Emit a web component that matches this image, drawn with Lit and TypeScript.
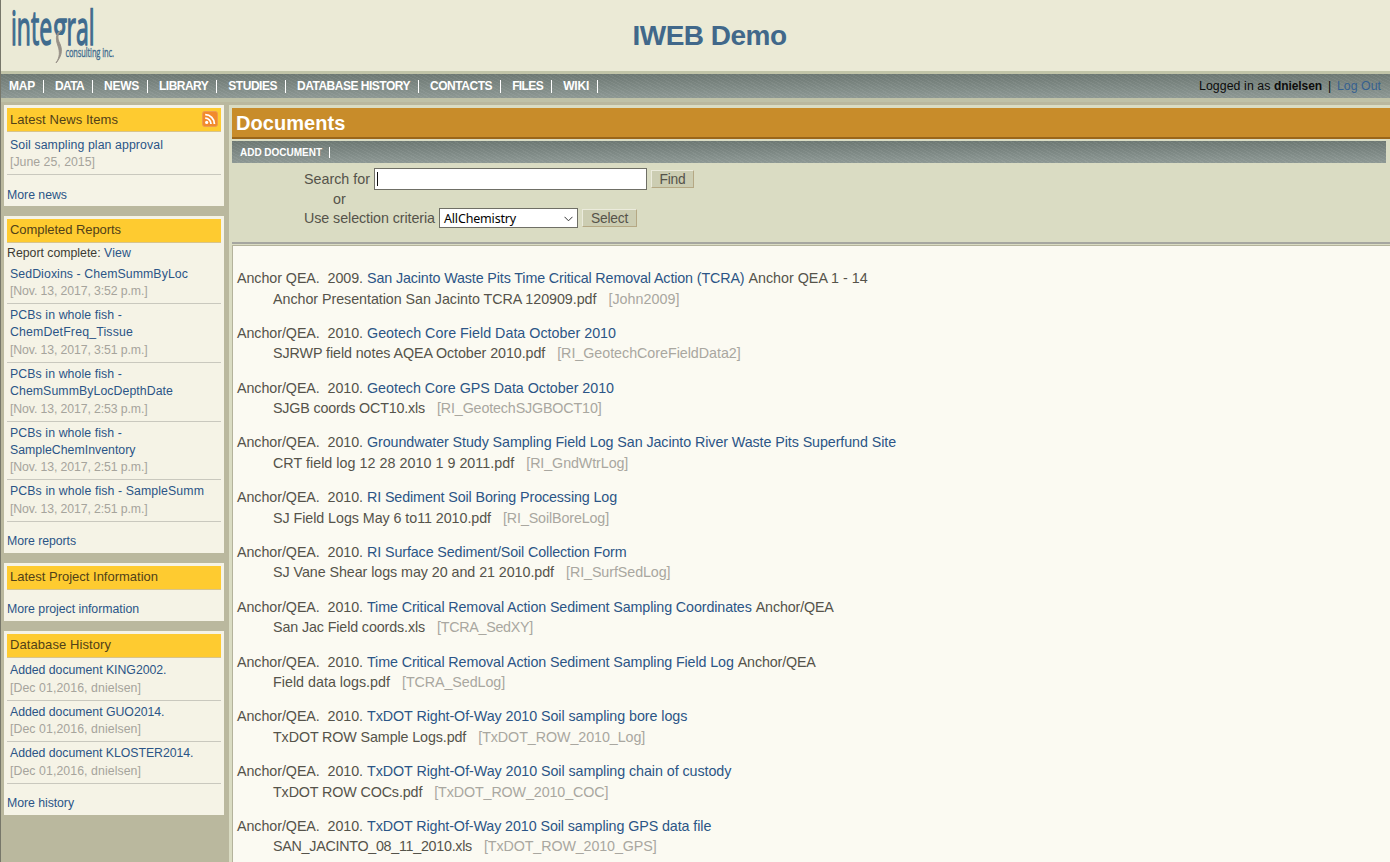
import { LitElement, html, css, svg, nothing } from "lit";
import { customElement, property } from "lit/decorators.js";
import { styleMap } from "lit/directives/style-map.js";

const ctx = document.createElement("canvas").getContext("2d")!;

/** Tracks a run of text so that it fills the given width. */
function run(text: string, width: number, font: string, cls = "") {
  ctx.font = font;
  const ls = (width - ctx.measureText(text).width) / text.length;
  return html`<span class="run ${cls}" style=${styleMap({ letterSpacing: ls.toFixed(3) + "px" })}>${text}</span>`;
}

const SANS = '"Liberation Sans"';
const DOC = `14.3px ${SANS}`;
const SIDE = `12.3px ${SANS}`;
const HEAD = `13px ${SANS}`;
const BTN = `13.8px ${SANS}`;
const NAV = `bold 12px ${SANS}`;

type Doc = {
  by: string; title: string; tw: number; extra?: string; ew?: number;
  file: string; fw: number; code: string; cw: number;
};

const A = "Anchor/QEA.\u00a0 2010.";
const docs: Doc[] = [
  { by: "Anchor QEA.\u00a0 2009.", title: "San Jacinto Waste Pits Time Critical Removal Action (TCRA)", tw: 378.5, extra: "Anchor QEA 1 - 14", ew: 120, file: "Anchor Presentation San Jacinto TCRA 120909.pdf", fw: 324.5, code: "[John2009]", cw: 71 },
  { by: A, title: "Geotech Core Field Data October 2010", tw: 249, file: "SJRWP field notes AQEA October 2010.pdf", fw: 274, code: "[RI_GeotechCoreFieldData2]", cw: 183.5 },
  { by: A, title: "Geotech Core GPS Data October 2010", tw: 247, file: "SJGB coords OCT10.xls", fw: 152, code: "[RI_GeotechSJGBOCT10]", cw: 164.5 },
  { by: A, title: "Groundwater Study Sampling Field Log San Jacinto River Waste Pits Superfund Site", tw: 529, file: "CRT field log 12 28 2010 1 9 2011.pdf", fw: 241.5, code: "[RI_GndWtrLog]", cw: 102 },
  { by: A, title: "RI Sediment Soil Boring Processing Log", tw: 250, file: "SJ Field Logs May 6 to11 2010.pdf", fw: 218, code: "[RI_SoilBoreLog]", cw: 106 },
  { by: A, title: "RI Surface Sediment/Soil Collection Form", tw: 259.5, file: "SJ Vane Shear logs may 20 and 21 2010.pdf", fw: 281, code: "[RI_SurfSedLog]", cw: 104.5 },
  { by: A, title: "Time Critical Removal Action Sediment Sampling Coordinates", tw: 385.5, extra: "Anchor/QEA", ew: 78, file: "San Jac Field coords.xls", fw: 152, code: "[TCRA_SedXY]", cw: 96 },
  { by: A, title: "Time Critical Removal Action Sediment Sampling Field Log", tw: 367.5, extra: "Anchor/QEA", ew: 78, file: "Field data logs.pdf", fw: 117, code: "[TCRA_SedLog]", cw: 103 },
  { by: A, title: "TxDOT Right-Of-Way 2010 Soil sampling bore logs", tw: 320.5, file: "TxDOT ROW Sample Logs.pdf", fw: 193.5, code: "[TxDOT_ROW_2010_Log]", cw: 167 },
  { by: A, title: "TxDOT Right-Of-Way 2010 Soil sampling chain of custody", tw: 364.5, file: "TxDOT ROW COCs.pdf", fw: 149.5, code: "[TxDOT_ROW_2010_COC]", cw: 174 },
  { by: A, title: "TxDOT Right-Of-Way 2010 Soil sampling GPS data file", tw: 344.5, file: "SAN_JACINTO_08_11_2010.xls", fw: 199, code: "[TxDOT_ROW_2010_GPS]", cw: 172.5 },
];

type Entry = { lines: [string, number][]; date: string; dw: number };
type Panel = { title: string; w: number; rss?: boolean; note?: boolean; entries: Entry[]; more: string; mw: number };

const panels: Panel[] = [
  { title: "Latest News Items", w: 108, rss: true, entries: [
    { lines: [["Soil sampling plan approval", 153]], date: "[June 25, 2015]", dw: 85 },
  ], more: "More news", mw: 60 },
  { title: "Completed Reports", w: 111, note: true, entries: [
    { lines: [["SedDioxins - ChemSummByLoc", 178]], date: "[Nov. 13, 2017, 3:52 p.m.]", dw: 137.5 },
    { lines: [["PCBs in whole fish -", 112], ["ChemDetFreq_Tissue", 123]], date: "[Nov. 13, 2017, 3:51 p.m.]", dw: 137.5 },
    { lines: [["PCBs in whole fish -", 112], ["ChemSummByLocDepthDate", 163]], date: "[Nov. 13, 2017, 2:53 p.m.]", dw: 137.5 },
    { lines: [["PCBs in whole fish -", 112], ["SampleChemInventory", 125.5]], date: "[Nov. 13, 2017, 2:51 p.m.]", dw: 137.5 },
    { lines: [["PCBs in whole fish - SampleSumm", 194]], date: "[Nov. 13, 2017, 2:51 p.m.]", dw: 137.5 },
  ], more: "More reports", mw: 69 },
  { title: "Latest Project Information", w: 148, entries: [], more: "More project information", mw: 132 },
  { title: "Database History", w: 101, entries: [
    { lines: [["Added document KING2002.", 156.5]], date: "[Dec 01,2016, dnielsen]", dw: 131 },
    { lines: [["Added document GUO2014.", 154.5]], date: "[Dec 01,2016, dnielsen]", dw: 131 },
    { lines: [["Added document KLOSTER2014.", 183.5]], date: "[Dec 01,2016, dnielsen]", dw: 131 },
  ], more: "More history", mw: 67 },
];

const menu: [string, number][] = [
  ["MAP", 26], ["DATA", 29], ["NEWS", 35], ["LIBRARY", 49.3], ["STUDIES", 48.7],
  ["DATABASE HISTORY", 113], ["CONTACTS", 62.1], ["FILES", 31], ["WIKI", 26],
];

@customElement("side-panel")
export class SidePanel extends LitElement {
  @property({ attribute: false }) panel!: Panel;
  static styles = css`
    :host { display: block; background: #f5f3e6; padding: 3px 3px 0; font: 12.3px/17.4px "Liberation Sans", Arial, sans-serif; color: #2b5586; }
    .run { white-space: pre; }
    .head { box-sizing: border-box; height: 24px; background: #fecb30; border-bottom: 1px solid #d8c48b; color: #514118; font-size: 13px; line-height: 22px; padding: 0 3px; display: flex; justify-content: space-between; align-items: flex-start; }
    .feed { line-height: 24px; }
    .rss { width: 16px; height: 16px; display: block; margin-top: 3px; }
    .note { color: #3c3b33; height: 20px; line-height: 20px; }
    .view { color: #2b5586; }
    .entry { border-bottom: 1px solid #c9c8be; padding: 3px 3px 2.6px; }
    .first { padding-top: 4.5px; }
    .noted .first { padding-top: 2.7px; }
    .line { display: block; }
    .date { color: #a6a49c; }
    .more { padding: 11.4px 0 2.2px; }
    .plain.fed .more { padding: 12px 0 1.6px; }
  `;
  render() {
    const p = this.panel;
    return html`<div class="${p.note ? "noted" : "plain"} ${p.rss ? "fed" : ""}">
      <div class="head ${p.rss ? "feed" : ""}">${run(p.title, p.w, HEAD)}${p.rss ? svg`
        <svg class="rss" viewBox="0 0 16 16"><rect x=".5" y=".5" width="15" height="15" rx="2.2" fill="#f28a2c" stroke="#ed9b50"/>
        <circle cx="4.7" cy="11.4" r="1.6" fill="#fff"/><path d="M3.2 7.1A5.8 5.8 0 0 1 9 12.9M3.2 3.7A9.2 9.2 0 0 1 12.4 12.9" fill="none" stroke="#fff" stroke-width="1.8"/></svg>` : nothing}</div>
      ${p.note ? html`<div class="note">${run("Report complete: ", 97, SIDE)}<a class="view">${run("View", 27, SIDE)}</a></div>` : nothing}
      ${p.entries.map((e, i) => html`<div class="entry ${i ? "" : "first"}">
        ${e.lines.map(([t, w]) => html`<span class="line">${run(t, w, SIDE)}</span>`)}
        <span class="line date">${run(e.date, e.dw, SIDE)}</span></div>`)}
      <div class="more">${run(p.more, p.mw, SIDE)}</div>
    </div>`;
  }
}

@customElement("app-root")
export class AppRoot extends LitElement {
  static styles = css`
    :host { display: flex; flex-direction: column; box-sizing: border-box; height: 862px; overflow: hidden; border-left: 1px solid #77776a; background: #bab89e; font: 14.3px/20.5px "Liberation Sans", Arial, sans-serif; color: #55534a; }
    .run { white-space: pre; }
    .top { flex: none; height: 71px; background: #ebead6; display: grid; grid-template-columns: 120px 1fr 92px; border-bottom: 3px solid #c1c4a8; }
    .logo { width: 120px; height: 71px; display: block; overflow: visible; }
    .brand { text-align: center; font: bold 28px/71px "Liberation Sans", Arial, sans-serif; color: #41688a; }
    .bar { background: repeating-linear-gradient(28deg, rgba(255,255,255,.06) 0 1px, transparent 1px 3px), linear-gradient(#6d7873, #8d9894); color: #fff; display: flex; align-items: center; }
    .menu { flex: none; height: 24px; padding-left: 8px; border-bottom: 4px solid #bfc1a7; font-size: 12px; }
    .item { font-weight: bold; border-right: 1px solid #fff; line-height: 13px; height: 13px; padding-right: 8px; margin-right: 11px; }
    .user { margin-left: auto; padding-right: 9px; color: #0c0c0c; white-space: pre; font-size: 12.3px; }
    .name { font-size: 12px; }
    .out { color: #35608f; }
    .body { flex: 1; min-height: 0; display: grid; grid-template-columns: 220px 1fr; column-gap: 5px; padding: 3px 0 0 3px; }
    .side { display: flex; flex-direction: column; gap: 10px; }
    .main { background: #dadcc3; padding: 3px 0 0 3px; display: flex; flex-direction: column; min-height: 0; }
    .title { flex: none; height: 29px; background: #c88c2a; border-bottom: 2px solid #9a661a; color: #fff; font: bold 20px/30px "Liberation Sans", Arial, sans-serif; padding-left: 4px; }
    .sub { flex: none; height: 22px; margin: 2px 4px 0 0; padding-left: 8px; font-size: 10px; }
    .add { height: 11px; line-height: 11px; padding-right: 7px; }
    .search { flex: none; height: 79px; box-sizing: border-box; padding: 5px 0 0 72px; }
    .row { display: flex; align-items: center; height: 22px; }
    .or { height: 18px; padding-left: 29px; }
    .pick { height: 20px; }
    .input { box-sizing: border-box; width: 273px; height: 22px; margin: 0 4px; background: #fff; border: 1px solid #6f6f66; padding: 3px 2px; }
    .caret { display: block; width: 1px; height: 14px; background: #111; }
    .select { box-sizing: border-box; width: 139px; height: 20px; margin: 0 4px; background: #fff; border: 1px solid #6f6f66; color: #000; font: 12.5px/18px "Noto Sans", sans-serif; padding: 1px 4px 0; display: flex; align-items: center; justify-content: space-between; }
    .chev { width: 9px; height: 6px; display: block; }
    .button { box-sizing: border-box; height: 18px; line-height: 17px; font-size: 13.8px; background: #cccdb2; border: 1px solid; border-color: #ebebdc #b5a884 #b5a884 #ebebdc; text-align: center; }
    .find { width: 43px; }
    .choose { width: 55px; }
    .rule { flex: none; height: 2px; background: #a5a6a0; margin-bottom: 1px; }
    .list { flex: 1; min-height: 0; overflow: hidden; background: #fbfaf2; border: 1px solid #b4b39c; border-width: 1px 0 0 1px; padding: 22px 0 0 4px; }
    .doc { height: 54.8px; }
    .line { display: flex; height: 20.5px; }
    .by { margin-right: 4px; }
    .link { color: #2b5586; margin-right: 4px; }
    .file { padding-left: 36px; gap: 12px; }
    .code { color: #a9a7a0; }
  `;
  render() {
    return html`
      <div class="top">
        <svg class="logo" viewBox="1 0 120 71">
          <defs><clipPath id="bowl"><path d="M50 0h20v35H50z"/></clipPath></defs>
          <g font-family="Open Sans, sans-serif" font-size="47" fill="#3f6b8e" stroke="#3f6b8e" stroke-width="1.5">
            <text transform="translate(11 44.5) scale(.49 1)">inte</text>
            <g clip-path="url(#bowl)"><text transform="translate(53 44.5) scale(.55 1)">g</text></g>
            <text transform="translate(66.500 44.5) scale(.49 1)">ral</text>
          </g>
          <path d="M62 30C57 34 57 38 60 44C63 51 61 57 56 63C60 57 60 52 58 46C55 38 56 32 62 30Z" fill="#969087" stroke="#969087" stroke-width=".9"/>
          <text transform="translate(65.500 57) scale(.62 1)" font-family="Open Sans, sans-serif" font-size="12" fill="#3f6b8e" stroke="#3f6b8e" stroke-width=".35" textLength="78">consulting inc.</text>
        </svg>
        <div class="brand">${run("IWEB Demo", 154, `bold 28px ${SANS}`)}</div>
      </div>
      <div class="bar menu">
        ${menu.map(([t, w]) => html`<span class="item">${run(t, w, NAV)}</span>`)}
        <span class="user">${run("Logged in as ", 75, SIDE)}<b class="name">${run("dnielsen", 48, NAV)}</b>${run("  |  ", 15, SIDE)}<a class="out">${run("Log Out", 44, SIDE)}</a></span>
      </div>
      <div class="body">
        <div class="side">${panels.map((p) => html`<side-panel .panel=${p}></side-panel>`)}</div>
        <div class="main">
          <div class="title">${run("Documents", 109.5, `bold 20px ${SANS}`)}</div>
          <div class="bar sub"><span class="item add">${run("ADD DOCUMENT", 82, `bold 10px ${SANS}`)}</span></div>
          <div class="search">
            <div class="row">${run("Search for", 66, DOC)}<span class="input"><i class="caret"></i></span><span class="button find">${run("Find", 26, BTN)}</span></div>
            <div class="row or">or</div>
            <div class="row pick">${run("Use selection criteria", 131, DOC)}<span class="select">${run("AllChemistry", 72, '12.5px "Noto Sans"')}<svg class="chev" viewBox="0 0 9 6"><path d="M.5 .8 4.500 4.800 8.500 .8" fill="none" stroke="#333"/></svg></span><span class="button choose">${run("Select", 37, BTN)}</span></div>
          </div>
          <div class="rule"></div>
          <div class="list">
            ${docs.map((d) => html`<div class="doc">
              <div class="line">${run(d.by, 126, DOC, "by")}${run(d.title, d.tw, DOC, "link")}${d.extra ? run(d.extra, d.ew!, DOC) : nothing}</div>
              <div class="line file">${run(d.file, d.fw, DOC)}${run(d.code, d.cw, DOC, "code")}</div>
            </div>`)}
          </div>
        </div>
      </div>`;
  }
}
